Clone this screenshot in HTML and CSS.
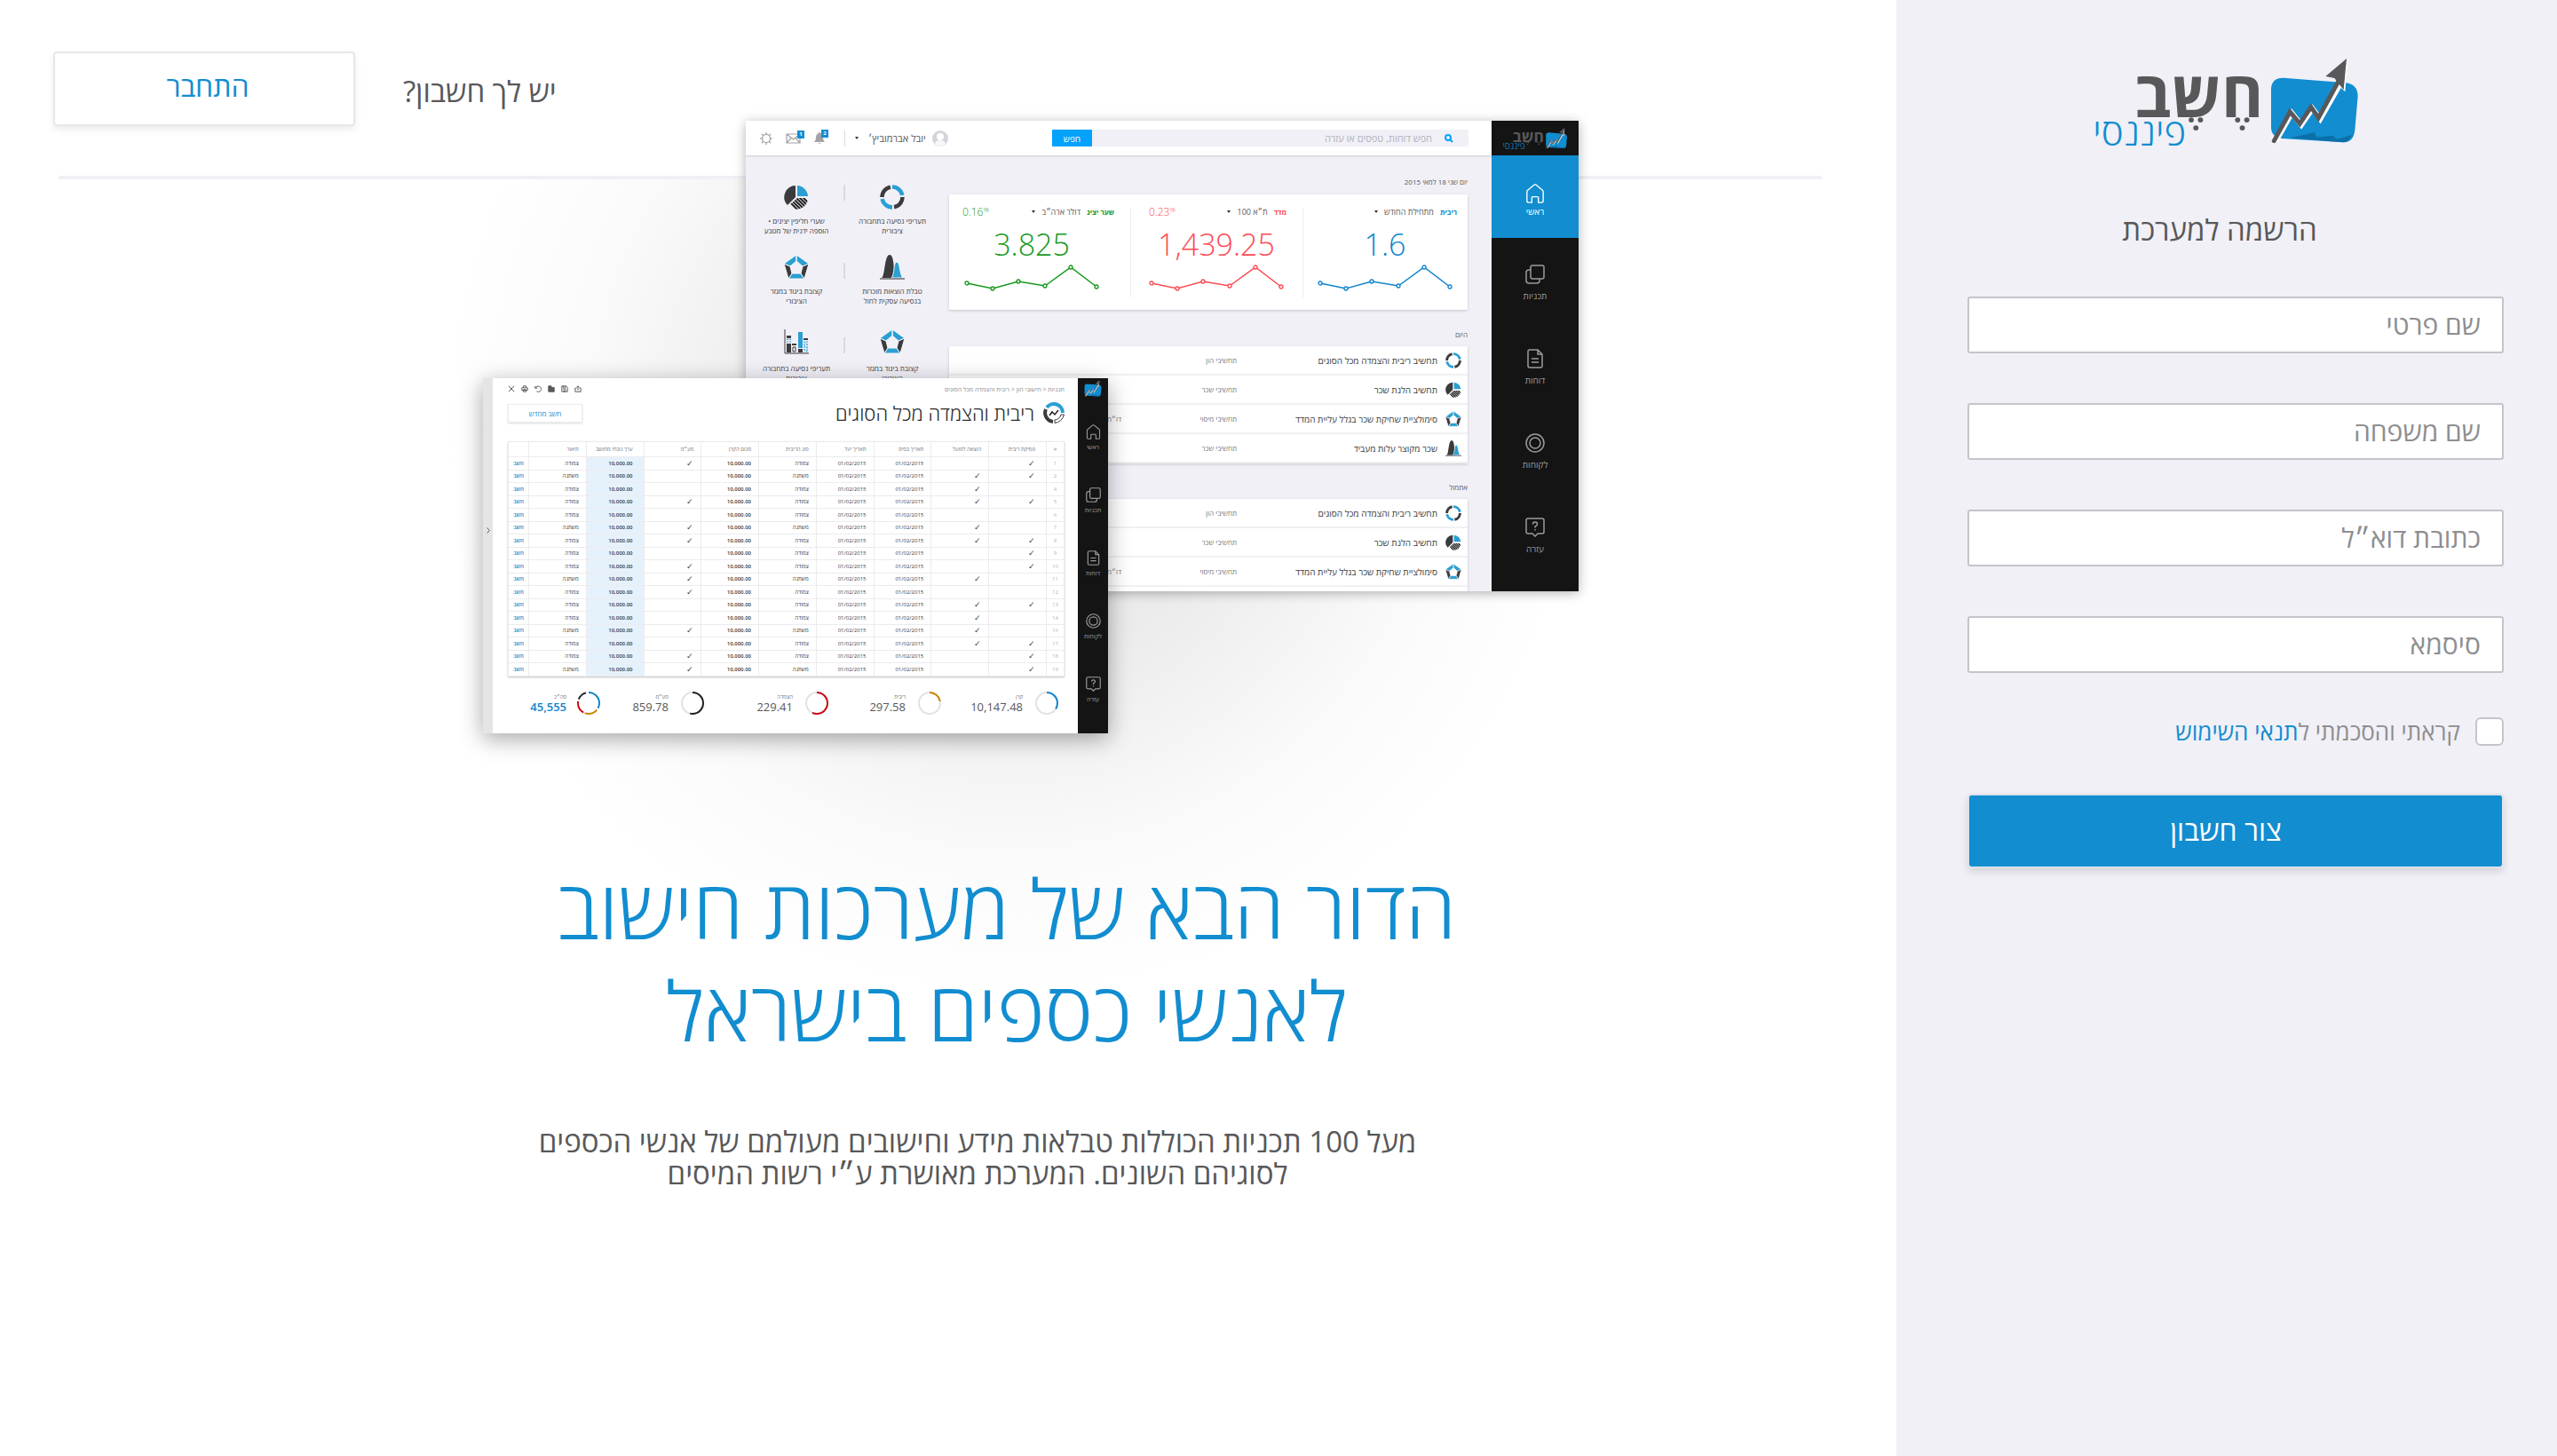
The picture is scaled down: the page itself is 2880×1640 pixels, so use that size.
FILE: index.html
```
<!DOCTYPE html>
<html lang="he" dir="rtl">
<head>
<meta charset="utf-8">
<meta name="viewport" content="width=device-width, initial-scale=1">
<title>חשב פיננסי - הרשמה למערכת</title>
<link rel="stylesheet" href="styles.css">
</head>
<body>

<svg class="defs" aria-hidden="true">
  <defs>
    <clipPath id="pie-clip"><path d="M15 15L27 15A13 13 0 0 1 5 24Z"/></clipPath>
    <symbol id="mark" viewBox="612 44 304 294">
      <path fill="#118dd0" d="M618 150Q620 112 660 113L870 130Q910 134 911 175L901 290Q896 332 860 331L655 318Q618 314 618 280Z"/>
      <path fill="#0b6fa8" d="M680 316L765 298L772 314L826 308L840 321L892 306Q880 330 860 331Z"/>
      <path fill="none" stroke="#fff" stroke-width="18" d="M634 327L688 232L720 272L758 217L784 252L858 122"/>
      <path fill="#fff" d="M878 52L868 160L846 140Z"/>
      <path fill="none" stroke="#58585a" stroke-width="15" stroke-linecap="round" d="M628 326L682 228L715 268L753 212L778 248L848 120"/>
      <path fill="#58585a" d="M873 48L802 108L832 114L863 154Z"/>
    </symbol>
    <symbol id="logo" viewBox="24 48 888 294">
      <use href="#mark" x="612" y="44" width="304" height="294"/>
      <text class="logo-name" x="374" y="247" text-anchor="middle">חֶשֶב</text>
      <text class="logo-sub" x="173" y="341" text-anchor="middle">פיננסי</text>
    </symbol>
    <symbol id="home" viewBox="0 0 22 24"><path d="M1 21V10Q1 8 3 7L9 2Q11 0 13 2L19 7Q21 8 21 10V21Q21 23 19 23H15V17Q15 16 14 16H8Q7 16 7 17V23H3Q1 23 1 21Z"/></symbol>
    <symbol id="copies" viewBox="0 0 22 22"><rect x="6" y="1" width="15" height="15" rx="2"/><path d="M6 6H4Q1 6 1 9V18Q1 21 4 21H13Q16 21 16 18V16"/></symbol>
    <symbol id="doc" viewBox="0 0 22 22"><path d="M3 3Q3 1 5 1H14L19 6V19Q19 21 17 21H5Q3 21 3 19ZM14 1V6H19M7 11H15M7 15H15"/></symbol>
    <symbol id="target" viewBox="0 0 22 22"><circle cx="11" cy="11" r="10"/><circle cx="11" cy="11" r="6"/></symbol>
    <symbol id="help" viewBox="0 0 22 22"><path d="M3 1H19Q21 1 21 3V16Q21 18 19 18H14L11 21L8 18H3Q1 18 1 16V3Q1 1 3 1Z"/><path d="M8.500 7.500Q8.500 5 11 5T13.500 7.500Q13.500 9 11 10V11.500M11 13V14.500"/></symbol>
    <symbol id="ring" viewBox="0 0 28 28"><g fill="none" stroke-width="4.500"><circle cx="14" cy="14" r="11.500" pathLength="100" stroke="#2a9fd3" stroke-dasharray="22 28" stroke-dashoffset="25"/><circle cx="14" cy="14" r="11.500" pathLength="100" stroke="#3b3b3d" stroke-dasharray="22 28"/></g></symbol>
    <symbol id="pie" viewBox="0 0 28 28"><path fill="#3b3b3d" d="M13 14V1A13 13 0 0 0 4 23Z"/><path fill="#2a9fd3" d="M15 13V1A13 13 0 0 1 27 13Z"/><path clip-path="url(#pie-clip)" stroke="#222" stroke-width="2" d="M4 13L20 29M8 13L24 29M12 13L28 29M16 13L32 29M0 13L16 29M20 13L32 25"/></symbol>
    <symbol id="penta" viewBox="0 0 28 28"><g stroke="#f7f7fb" stroke-width="1"><path fill="#2a9fd3" d="M14 0V7L7 13L0 10ZM14 0V7L21 13L28 10ZM5 27L9 21H19L23 27Z"/><path fill="#3b3b3d" d="M0 10L7 13L9 21L5 27ZM28 10L21 13L19 21L23 27Z"/></g></symbol>
    <symbol id="hills" viewBox="0 0 28 28"><path fill="#3b3b3d" d="M2 26C6 24 5 0 11 0C17 0 15 22 18 26Z"/><path fill="#2a9fd3" stroke="#f7f7fb" d="M13 26C17 22 15 8 19 8C23 8 22 22 26 26Z"/><path fill="#8d8d92" d="M0 26H28V28H0Z"/></symbol>
    <symbol id="bars" viewBox="0 0 28 28"><path fill="none" stroke="#3b3b3d" d="M1 0V27H28"/><path fill="#3b3b3d" d="M3 7H8V10H3ZM3 16H8V26H3ZM9 16H14V18H9ZM16 22H21V26H16ZM22 10H27V12H22Z"/><path fill="#2a9fd3" d="M16 3H21V21H16Z"/><path fill="none" stroke="#2a9fd3" stroke-dasharray="2 1" d="M3 11.500H8M3 14H8M23 14L27 18M23 18L27 22M23 22L27 26M26 13V26M23 13V26"/><path fill="none" stroke="#3b3b3d" d="M10 20H13V25H10Z"/></symbol>
    <symbol id="spark" viewBox="0 0 152 30"><path fill="none" stroke="currentColor" stroke-width="1.500" d="M3 21L32 27L61 19L91 24L120 3L149 25"/><g fill="#fff" stroke="currentColor" stroke-width="1.300"><circle cx="3" cy="21" r="2"/><circle cx="32" cy="27" r="2"/><circle cx="61" cy="19" r="2"/><circle cx="91" cy="24" r="2"/><circle cx="120" cy="3" r="2"/><circle cx="149" cy="25" r="2"/></g></symbol>
  </defs>
</svg>

<div class="page">
  <aside class="signup">
    <svg class="logo" role="img" aria-label="חשב פיננסי"><use href="#logo"/></svg>
    <h2 class="signup-title">הרשמה למערכת</h2>
    <form class="form">
      <input class="field" type="text" placeholder="שם פרטי" aria-label="שם פרטי">
      <input class="field" type="text" placeholder="שם משפחה" aria-label="שם משפחה">
      <input class="field" type="email" placeholder="כתובת דוא״ל" aria-label="כתובת דוא״ל">
      <input class="field" type="password" placeholder="סיסמא" aria-label="סיסמא">
      <div class="terms">
        <input class="check" type="checkbox" id="terms">
        <label for="terms">קראתי והסכמתי ל<a href="#terms">תנאי השימוש</a></label>
      </div>
      <button class="submit" type="submit">צור חשבון</button>
    </form>
  </aside>

  <main class="main">
    <header class="header">
      <span class="question">יש לך חשבון?</span>
      <button class="login" type="button">התחבר</button>
    </header>
    <hr class="rule">

    <section class="hero">
      <div class="stage">

        <div class="dash">
          <nav class="nav">
            <div class="nav-logo"><svg><use href="#logo"/></svg></div>
            <a class="nav-item active" href="#home"><svg><use href="#home"/></svg>ראשי</a>
            <a class="nav-item" href="#plans"><svg><use href="#copies"/></svg>תכניות</a>
            <a class="nav-item" href="#reports"><svg><use href="#doc"/></svg>דוחות</a>
            <a class="nav-item" href="#clients"><svg><use href="#target"/></svg>לקוחות</a>
            <a class="nav-item" href="#support"><svg><use href="#help"/></svg>עזרה</a>
          </nav>
          <div class="dash-main">
            <div class="topbar">
              <div class="search">
                <svg viewBox="0 0 10 10"><circle cx="4" cy="4" r="3"/><path d="M6 6L9 9"/></svg>
                <input type="search" placeholder="חפש דוחות, טפסים או עזרה" aria-label="חיפוש">
              </div>
              <button class="search-btn" type="button">חפש</button>
              <svg class="avatar" viewBox="0 0 18 18"><circle cx="9" cy="9" r="9" fill="#d4d4db"/><circle cx="9" cy="7" r="4" fill="#fff"/><path fill="#f7f7fb" d="M3 15Q4 11 9 11T15 15Q12 18 9 18T3 15Z"/></svg>
              <span class="user">יובל אברמוביץ׳</span>
              <span class="caret"></span>
              <span class="bar"></span>
              <span class="tool bell"><svg viewBox="0 0 12 13"><path fill="#a3a3a6" d="M6 0Q7 0 7 1Q10 2 10 6Q10 9 12 11H0Q2 9 2 6Q2 2 5 1Q5 0 6 0ZM4 12H8L6 13Z"/></svg><b class="badge">2</b></span>
              <span class="tool mail"><svg viewBox="0 0 17 12"><path fill="none" stroke="#a3a3a6" stroke-width="1.200" d="M1 1H16V11H1ZM1 1L8.500 7L16 1M1 11L6 5.500M16 11L11 5.500"/></svg><b class="badge">1</b></span>
              <svg class="gear" viewBox="0 0 14 14"><circle cx="7" cy="7" r="4.500"/><path d="M7 0V2M7 12V14M0 7H2M12 7H14M2 2L3.500 3.500M10.500 10.500L12 12M12 2L10.500 3.500M2 12L3.500 10.500"/></svg>
            </div>
            <div class="dash-body">
              <div class="cards">
                <p class="caption">יום שני 18 למאי 2015</p>
                <div class="stats">
                  <div class="stat blue"><div class="stat-head"><b>ריבית</b><span>מתחילת החודש</span><i class="caret"></i></div><div class="num">1.6</div><svg class="spark"><use href="#spark"/></svg></div>
                  <div class="stat red"><div class="stat-head"><b>מדד</b><span>ת״א 100</span><i class="caret"></i><em dir="ltr">0.23<sup>%</sup></em></div><div class="num">1,439.25</div><svg class="spark"><use href="#spark"/></svg></div>
                  <div class="stat green"><div class="stat-head"><b>שער יציג</b><span>דולר ארה״ב</span><i class="caret"></i><em dir="ltr">0.16<sup>%</sup></em></div><div class="num">3.825</div><svg class="spark"><use href="#spark"/></svg></div>
                </div>
                <p class="caption">היום</p>
                <ul class="list">
                  <li><svg><use href="#ring"/></svg><span class="name">תחשיב ריבית והצמדה מכל הסוגים</span><span class="kind">תחשיבי הון</span></li>
                  <li><svg><use href="#pie"/></svg><span class="name">תחשיב הלנת שכר</span><span class="kind">תחשיבי שכר</span></li>
                  <li><svg><use href="#penta"/></svg><span class="name">סימולציית שחיקת שכר בגלל עליית המדד</span><span class="kind">תחשיבי מיסוי</span><span>דו״ח</span></li>
                  <li><svg><use href="#hills"/></svg><span class="name">שכר מקוצר עלות מעביד</span><span class="kind">תחשיבי שכר</span></li>
                </ul>
                <p class="caption">אתמול</p>
                <ul class="list">
                  <li><svg><use href="#ring"/></svg><span class="name">תחשיב ריבית והצמדה מכל הסוגים</span><span class="kind">תחשיבי הון</span></li>
                  <li><svg><use href="#pie"/></svg><span class="name">תחשיב הלנת שכר</span><span class="kind">תחשיבי שכר</span></li>
                  <li><svg><use href="#penta"/></svg><span class="name">סימולציית שחיקת שכר בגלל עליית המדד</span><span class="kind">תחשיבי מיסוי</span><span>דו״ח</span></li>
                  <li></li>
                </ul>
              </div>
              <div class="shortcuts">
                <div class="shortcut"><svg><use href="#ring"/></svg>תעריפי נסיעה בתחבורה<br>ציבורית</div>
                <i class="sep"></i>
                <div class="shortcut"><svg><use href="#pie"/></svg>שערי חליפין יציגים •<br>הוספה ידנית של מטבע</div>
                <div class="shortcut"><svg><use href="#hills"/></svg>טבלת הוצאות מוכרות<br>בנסיעה עסקית לחול</div>
                <i class="sep low"></i>
                <div class="shortcut"><svg><use href="#penta"/></svg>קצובת ביגוד במגזר<br>הציבורי</div>
                <div class="shortcut last"><svg><use href="#penta"/></svg>קצובת ביגוד במגזר<br>הציבורי</div>
                <i class="sep low"></i>
                <div class="shortcut last"><svg><use href="#bars"/></svg>תעריפי נסיעה בתחבורה<br>ציבורים</div>
              </div>
            </div>
          </div>
        </div>

        <div class="calc">
          <nav class="nav small">
            <div class="nav-logo"><svg><use href="#mark"/></svg></div>
            <a class="nav-item" href="#home"><svg><use href="#home"/></svg>ראשי</a>
            <a class="nav-item" href="#plans"><svg><use href="#copies"/></svg>תכניות</a>
            <a class="nav-item" href="#reports"><svg><use href="#doc"/></svg>דוחות</a>
            <a class="nav-item" href="#clients"><svg><use href="#target"/></svg>לקוחות</a>
            <a class="nav-item" href="#support"><svg><use href="#help"/></svg>עזרה</a>
          </nav>
          <div class="calc-main">
            <div class="calc-top">
              <span class="crumbs">תכניות &lt; חישובי הון &lt; ריבית והצמדה מכל הסוגים</span>
              <div class="tools">
                <svg viewBox="0 0 10 10"><path d="M3 4H1V9H9V4H7M5 7V1M3 3L5 1L7 3"/></svg>
                <svg viewBox="0 0 10 10"><path d="M1 1H7L9 3V9H1ZM3 1V4H6V1M3 6H7M3 8H7"/></svg>
                <svg viewBox="0 0 10 10"><path fill="#58585a" d="M1 1H5V3H9V9H1Z"/></svg>
                <svg viewBox="0 0 10 10"><path d="M1 1V4H4M1.500 4A4 4 0 1 1 3 8.500"/></svg>
                <svg viewBox="0 0 10 10"><path d="M3 3V1H7V3M1 3.500H9V7H1ZM3 6H7V9H3Z"/></svg>
                <svg viewBox="0 0 10 10"><path d="M1 1L9 9M9 1L1 9"/></svg>
              </div>
            </div>
            <div class="calc-head">
              <svg viewBox="0 0 24 24"><path fill="none" stroke="#2a9fd3" stroke-width="4" d="M4 6A10 10 0 0 1 22 12"/><path fill="none" stroke="#3b3b3d" stroke-width="4" d="M3 8A10 10 0 0 0 11 22"/><path fill="none" stroke="#3b3b3d" d="M13 23.500A12 12 0 0 0 23.500 14H20A8 8 0 0 1 13 20Z"/><path fill="none" stroke="#222" stroke-width="1.500" d="M7 15L10 11L13 14L17 9"/></svg>
              <h3>ריבית והצמדה מכל הסוגים</h3>
              <button type="button">חשב מחדש</button>
            </div>
            <table class="grid">
              <colgroup><col class="c-no"><col class="c-int"><col><col><col><col><col><col><col><col><col class="c-act"></colgroup>
              <thead><tr><th>#</th><th>פסיקת ריבית</th><th>הוצאה לפועל</th><th>תאריך בסיס</th><th>תאריך יעד</th><th>סוג הריבית</th><th>סכום הקרן</th><th>מע״מ</th><th>ערך נוכחי מחושב</th><th>תיאור</th><th></th></tr></thead>
              <tbody>
                <tr><td>1</td><td>✓</td><td></td><td>01/02/2015</td><td>01/02/2015</td><td>צמודה</td><td>10,000.00</td><td>✓</td><td>10,000.00</td><td>צמודה</td><td><a href="#calc">חשב</a></td></tr>
                <tr><td>2</td><td>✓</td><td>✓</td><td>01/02/2015</td><td>01/02/2015</td><td>משתנה</td><td>10,000.00</td><td></td><td>10,000.00</td><td>משתנה</td><td><a href="#calc">חשב</a></td></tr>
                <tr><td>4</td><td></td><td>✓</td><td>01/02/2015</td><td>01/02/2015</td><td>צמודה</td><td>10,000.00</td><td></td><td>10,000.00</td><td>צמודה</td><td><a href="#calc">חשב</a></td></tr>
                <tr><td>5</td><td>✓</td><td>✓</td><td>01/02/2015</td><td>01/02/2015</td><td>צמודה</td><td>10,000.00</td><td>✓</td><td>10,000.00</td><td>צמודה</td><td><a href="#calc">חשב</a></td></tr>
                <tr><td>6</td><td></td><td></td><td>01/02/2015</td><td>01/02/2015</td><td>צמודה</td><td>10,000.00</td><td></td><td>10,000.00</td><td>צמודה</td><td><a href="#calc">חשב</a></td></tr>
                <tr><td>7</td><td></td><td>✓</td><td>01/02/2015</td><td>01/02/2015</td><td>משתנה</td><td>10,000.00</td><td>✓</td><td>10,000.00</td><td>משתנה</td><td><a href="#calc">חשב</a></td></tr>
                <tr><td>8</td><td>✓</td><td>✓</td><td>01/02/2015</td><td>01/02/2015</td><td>צמודה</td><td>10,000.00</td><td>✓</td><td>10,000.00</td><td>צמודה</td><td><a href="#calc">חשב</a></td></tr>
                <tr><td>9</td><td>✓</td><td></td><td>01/02/2015</td><td>01/02/2015</td><td>צמודה</td><td>10,000.00</td><td></td><td>10,000.00</td><td>צמודה</td><td><a href="#calc">חשב</a></td></tr>
                <tr><td>10</td><td>✓</td><td></td><td>01/02/2015</td><td>01/02/2015</td><td>צמודה</td><td>10,000.00</td><td>✓</td><td>10,000.00</td><td>צמודה</td><td><a href="#calc">חשב</a></td></tr>
                <tr><td>11</td><td></td><td>✓</td><td>01/02/2015</td><td>01/02/2015</td><td>משתנה</td><td>10,000.00</td><td>✓</td><td>10,000.00</td><td>משתנה</td><td><a href="#calc">חשב</a></td></tr>
                <tr><td>12</td><td></td><td></td><td>01/02/2015</td><td>01/02/2015</td><td>צמודה</td><td>10,000.00</td><td>✓</td><td>10,000.00</td><td>צמודה</td><td><a href="#calc">חשב</a></td></tr>
                <tr><td>13</td><td>✓</td><td>✓</td><td>01/02/2015</td><td>01/02/2015</td><td>צמודה</td><td>10,000.00</td><td></td><td>10,000.00</td><td>צמודה</td><td><a href="#calc">חשב</a></td></tr>
                <tr><td>14</td><td></td><td>✓</td><td>01/02/2015</td><td>01/02/2015</td><td>צמודה</td><td>10,000.00</td><td></td><td>10,000.00</td><td>צמודה</td><td><a href="#calc">חשב</a></td></tr>
                <tr><td>16</td><td></td><td>✓</td><td>01/02/2015</td><td>01/02/2015</td><td>משתנה</td><td>10,000.00</td><td>✓</td><td>10,000.00</td><td>משתנה</td><td><a href="#calc">חשב</a></td></tr>
                <tr><td>17</td><td>✓</td><td>✓</td><td>01/02/2015</td><td>01/02/2015</td><td>צמודה</td><td>10,000.00</td><td></td><td>10,000.00</td><td>צמודה</td><td><a href="#calc">חשב</a></td></tr>
                <tr><td>18</td><td>✓</td><td></td><td>01/02/2015</td><td>01/02/2015</td><td>צמודה</td><td>10,000.00</td><td>✓</td><td>10,000.00</td><td>צמודה</td><td><a href="#calc">חשב</a></td></tr>
                <tr><td>19</td><td>✓</td><td></td><td>01/02/2015</td><td>01/02/2015</td><td>משתנה</td><td>10,000.00</td><td>✓</td><td>10,000.00</td><td>משתנה</td><td><a href="#calc">חשב</a></td></tr>
              </tbody>
            </table>
            <div class="totals">
              <div class="total"><svg viewBox="0 0 26 26"><circle cx="13" cy="13" r="12"/><circle cx="13" cy="13" r="12" pathLength="100" stroke="#0f84cc" stroke-dasharray="34 66"/></svg><span><small>קרן</small>10,147.48</span></div>
              <div class="total"><svg viewBox="0 0 26 26"><circle cx="13" cy="13" r="12"/><circle cx="13" cy="13" r="12" pathLength="100" stroke="#cc8500" stroke-dasharray="22 78"/></svg><span><small>ריבית</small>297.58</span></div>
              <div class="total"><svg viewBox="0 0 26 26"><circle cx="13" cy="13" r="12"/><circle cx="13" cy="13" r="12" pathLength="100" stroke="#cc0a14" stroke-dasharray="57 43"/></svg><span><small>הצמדה</small>229.41</span></div>
              <div class="total"><svg viewBox="0 0 26 26"><circle cx="13" cy="13" r="12"/><circle cx="13" cy="13" r="12" pathLength="100" stroke="#222" stroke-dasharray="54 46"/></svg><span><small>מע״מ</small>859.78</span></div>
              <div class="total sum"><svg viewBox="0 0 26 26"><circle cx="13" cy="13" r="12" pathLength="100" stroke="#0f84cc" stroke-dasharray="33 67"/><circle cx="13" cy="13" r="12" pathLength="100" stroke="#cc8500" stroke-dasharray="20 80" stroke-dashoffset="-36"/><circle cx="13" cy="13" r="12" pathLength="100" stroke="#cc0a14" stroke-dasharray="20 80" stroke-dashoffset="-58"/><circle cx="13" cy="13" r="12" pathLength="100" stroke="#222" stroke-dasharray="15 85" stroke-dashoffset="-81"/></svg><span><small>סה״כ</small>45,555</span></div>
            </div>
          </div>
          <div class="strip"><svg viewBox="0 0 4 7"><path d="M0.500 0.500L3.500 3.500L0.500 6.500"/></svg></div>
        </div>
      </div>

      <h1 class="headline">הדור הבא של מערכות חישוב<br>לאנשי כספים בישראל</h1>
      <p class="lead">מעל 100 תכניות הכוללות טבלאות מידע וחישובים מעולמם של אנשי הכספים<br>לסוגיהם השונים. המערכת מאושרת ע״י רשות המיסים</p>
    </section>
  </main>
</div>
</body>
</html>
```
FILE: styles.css
```
* { box-sizing: border-box; }

body {
  margin: 0;
  font-family: "Open Sans", "Liberation Sans", sans-serif;
  color: #58585a;
  background: #fff;
}

h1, h2, h3, p, ul { margin: 0; padding: 0; font-weight: 400; }
a { color: inherit; text-decoration: none; }
button, input { font-family: inherit; }
button { cursor: pointer; padding: 0; }
.defs { position: absolute; width: 0; height: 0; }

.page { display: flex; min-height: 100vh; }

/* Sign-up panel */
.signup {
  flex: 0 0 744px;
  display: flex;
  flex-direction: column;
  align-items: center;
  padding-top: 66px;
  background: #f1f0f7;
}
.logo { width: 296px; height: 98px; }
.logo-name { font-size: 216px; font-weight: 700; fill: #58585a; }
.logo-sub { font-size: 126px; font-weight: 300; fill: #118dd0; }
.signup-title {
  margin: 75px 0 55px;
  padding-right: 16px;
  font-size: 33px;
  line-height: 40px;
}
.form {
  align-self: stretch;
  display: flex;
  flex-direction: column;
  gap: 56px;
  padding: 0 60px 0 80px;
}
.field {
  width: 100%;
  height: 64px;
  padding: 0 24px 2px;
  border: 2px solid #c4c4ca;
  border-radius: 3px;
  background: #fff;
  color: #58585a;
  font-size: 30px;
  outline: 0;
}
.field::placeholder { color: #8e8e90; opacity: 1; }
.terms {
  display: flex;
  align-items: center;
  gap: 17px;
  margin: -6px 0 -2px;
  font-size: 26px;
  line-height: 32px;
  color: #8e8e90;
}
.terms a { color: #118dd0; }
.check {
  appearance: none;
  width: 32px;
  height: 32px;
  margin: 0;
  border: 2px solid #c4c4ca;
  border-radius: 6px;
  background: #fff;
}
.submit {
  height: 84px;
  padding: 0 22px 4px 0;
  border: 2px solid #dfe3ea;
  border-radius: 4px;
  background: #118dd0;
  background-clip: padding-box;
  box-shadow: 0 4px 8px rgba(0, 0, 0, .12);
  color: #fff;
  font-size: 32px;
}

/* Page header */
.main { flex: 1; min-width: 0; }
.header {
  display: flex;
  justify-content: flex-end;
  align-items: center;
  gap: 54px;
  padding: 58px 84px 0 60px;
}
.question { padding-top: 4px; font-size: 33px; }
.login {
  width: 340px;
  height: 84px;
  padding: 0 0 8px 8px;
  border: 2px solid #e6e6ec;
  border-radius: 4px;
  background: #fff;
  box-shadow: 0 4px 8px rgba(0, 0, 0, .08);
  color: #118dd0;
  font-size: 32px;
}
.rule { height: 4px; margin: 56px 84px 0 66px; border: 0; background: #f0f0f7; }

/* Hero */
.hero {
  display: flex;
  flex-direction: column;
  align-items: center;
  background: radial-gradient(circle 640px at 1140px 278px, #dcdcdc 0, #ebebeb 40%, #fafafa 75%, #fff 100%);
}
.stage {
  display: grid;
  width: 1420px;
  margin-top: -66px;
  padding-left: 186px;
}
.headline {
  margin-top: 139px;
  padding-left: 132px;
  font-size: 92px;
  line-height: 115px;
  font-weight: 300;
  color: #118dd0;
  text-align: center;
}
.lead {
  margin-top: 73px;
  padding: 0 0 60px 66px;
  font-size: 33px;
  line-height: 36px;
  text-align: center;
}

/* Side navigation of both windows */
.nav { background: #141414; }
.nav-logo { display: flex; justify-content: center; align-items: center; height: 39px; }
.nav-logo svg { width: 72px; height: 24px; }
.nav-item {
  display: flex;
  flex-direction: column;
  align-items: center;
  gap: 6px;
  height: 95px;
  padding-top: 30px;
  color: #9b9b9d;
  font-size: 10px;
  line-height: 14px;
}
.nav-item svg { width: 22px; height: 22px; fill: none; stroke: currentColor; stroke-width: 1.5; }
.nav-item.active { gap: 2px; height: 93px; padding-top: 32px; background: #118dd0; color: #fff; }
.nav.small .nav-logo { height: 42px; padding-bottom: 20px; }
.nav.small .nav-logo svg { width: 20px; height: 19px; }
.nav.small .nav-item { gap: 4px; height: 71px; padding-top: 10px; font-size: 7px; line-height: 10px; }
.nav.small .nav-item svg { width: 17px; height: 17px; }

/* Dashboard window */
.dash {
  grid-area: 1 / 1;
  justify-self: start;
  align-self: start;
  display: grid;
  grid-template-columns: 98px 1fr;
  width: 938px;
  height: 530px;
  overflow: hidden;
  background: #f1f0f7;
  box-shadow: 0 2px 12px rgba(0, 0, 0, .3);
}
.topbar {
  display: flex;
  align-items: center;
  height: 39px;
  padding: 0 26px 0 16px;
  background: #fff;
  box-shadow: 0 1px 2px rgba(0, 0, 0, .15);
  font-size: 11px;
}
.search { display: flex; align-items: center; gap: 14px; flex: 0 0 424px; height: 19px; padding: 0 17px; background: #f1f0f7; }
.search svg { flex: none; width: 10px; height: 10px; fill: none; stroke: #03a2fb; stroke-width: 2; }
.search input { flex: 1; min-width: 0; padding: 0; border: 0; background: none; font-size: 11px; line-height: 18px; outline: 0; }
.search input::placeholder { color: #b0b0bb; opacity: 1; }
.search-btn { width: 45px; height: 19px; border: 0; background: #03a2fb; color: #fff; font-size: 10px; line-height: 16px; }
.avatar { width: 18px; height: 18px; margin: 0 auto 0 7px; }
.user { white-space: nowrap; }
.caret { width: 0; height: 0; border: 2px solid transparent; border-top: 3px solid #333; border-bottom: 0; }
.topbar .caret { margin: 0 11px; }
.bar { width: 1px; height: 18px; margin-left: 22px; background: #d9d9de; }
.tool { position: relative; display: block; margin-left: 15px; }
.tool svg { display: block; }
.bell svg { width: 12px; height: 13px; }
.mail svg { width: 17px; height: 12px; }
.badge {
  position: absolute;
  top: -3px;
  right: -4px;
  width: 8px;
  height: 9px;
  background: #118dd0;
  color: #fff;
  font-size: 6px;
  line-height: 9px;
  text-align: center;
}
.gear { width: 14px; height: 14px; fill: none; stroke: #98989b; stroke-width: 1.2; }

.dash-body { display: grid; grid-template-columns: 584px 1fr; padding-right: 27px; }
.cards { padding-top: 24px; }
.caption { font-size: 8px; line-height: 12px; margin-bottom: 7px; }
.caption:first-child { margin-bottom: 8px; }
.stats {
  display: grid;
  grid-template-columns: 186px 194px 204px;
  height: 130px;
  margin-bottom: 22px;
  background: #fff;
  box-shadow: 0 1px 3px rgba(0, 0, 0, .18);
}
.stat {
  display: flex;
  flex-direction: column;
  align-items: center;
  padding-top: 12px;
  background: linear-gradient(#ececf0, #ececf0) left 16px / 1px 100px no-repeat;
}
.stat.green { padding-right: 18px; background: none; }
.stat-head { display: flex; align-items: center; align-self: stretch; gap: 7px; height: 14px; padding: 0 12px; font-size: 9px; white-space: nowrap; }
.red .stat-head { padding: 0 18px 0 21px; }
.green .stat-head { padding: 0 0 0 15px; }
.stat-head b { font-size: 8px; }
.stat-head em { margin-right: auto; font-style: normal; font-size: 12px; font-weight: 300; }
.stat-head sup { font-size: 8px; line-height: 8px; vertical-align: 4px; }
.stat-head span { color: #58585a; }
.blue { color: #0f84cc; }
.red { color: #fb4b52; }
.green { color: #16991d; }
.num { margin-top: 12px; font-size: 34px; line-height: 36px; font-weight: 300; }
.spark { width: 152px; height: 30px; margin-top: 5px; }

.list { list-style: none; margin-bottom: 21px; background: #fff; box-shadow: 0 1px 3px rgba(0, 0, 0, .18); }
.list li { display: flex; align-items: center; height: 33px; padding-right: 7px; border-bottom: 2px solid #f1f1f3; font-size: 8px; color: #77777a; }
.list svg { width: 18px; height: 18px; margin-left: 9px; }
.list .name { width: 226px; font-size: 10px; color: #3b3b3d; }
.list .kind { width: 130px; }

.shortcuts {
  display: grid;
  grid-template-columns: 1fr 2px 1fr;
  grid-template-rows: 79px 84px auto;
  align-content: start;
  padding: 33px 11px 0 4px;
}
.shortcut { font-size: 8px; line-height: 11px; color: #3b3b3d; text-align: center; }
.shortcut svg { display: block; width: 28px; height: 28px; margin: 0 auto 7px; }
.shortcut.last svg { margin-bottom: 10px; }
.sep { height: 18px; background: #d9d9de; }
.sep.low { margin-top: 9px; }

/* Calculation window */
.calc {
  grid-area: 1 / 1;
  justify-self: end;
  display: grid;
  grid-template-columns: 34px 1fr 11px;
  width: 704px;
  height: 400px;
  margin-top: 290px;
  background: #fff;
  box-shadow: 0 6px 24px rgba(0, 0, 0, .35);
}
.calc-main { padding: 6px 15px 0 17px; }
.calc-top { display: flex; justify-content: space-between; align-items: center; height: 12px; }
.crumbs { font-size: 7px; color: #8e8e90; }
.tools { display: flex; gap: 7px; }
.tools svg { width: 8px; height: 8px; fill: none; stroke: #58585a; stroke-width: 1.2; }
.calc-head { display: flex; align-items: center; height: 24px; margin: 9px 0 20px; }
.calc-head svg { width: 24px; height: 24px; margin-left: 10px; }
.calc-head h3 { font-size: 22px; line-height: 24px; font-weight: 300; color: #2b2b2d; }
.calc-head button {
  width: 84px;
  height: 21px;
  margin-right: auto;
  border: 1px solid #ececf0;
  background: #fff;
  box-shadow: 0 1px 2px rgba(0, 0, 0, .15);
  color: #118dd0;
  font-size: 8px;
}
.grid {
  width: 100%;
  height: 265px;
  table-layout: fixed;
  border-collapse: collapse;
  box-shadow: 0 1px 2px rgba(0, 0, 0, .25);
  font-size: 6px;
  line-height: 8px;
}
.grid th, .grid td { padding: 0 8px 0 0; border: 1px solid #ececef; text-align: right; font-weight: 400; white-space: nowrap; }
.grid thead tr { height: 17px; }
.grid th { color: #77777a; }
.grid td { color: #3b3b3d; }
.c-no { width: 20px; }
.c-int { width: 65px; }
.c-act { width: 23px; }
.grid td:first-child, .grid th:first-child, .grid td:last-child { padding: 0; text-align: center; color: #b5b5b8; }
.grid td:nth-child(2), .grid th:nth-child(2) { padding-right: 12px; }
.grid td:nth-child(2), .grid td:nth-child(3), .grid td:nth-child(8) { font-size: 9px; }
.grid td:nth-child(7), .grid td:nth-child(9) { font-weight: 600; }
.grid th:nth-child(9), .grid td:nth-child(9) { padding-right: 12px; }
.grid td:nth-child(9) { background: #e5f2fb; }
.grid td a { color: #118dd0; font-weight: 600; }

.totals { display: grid; grid-template-columns: 132px 127px 140px 117px auto; margin-top: 17px; padding-right: 7px; }
.total { display: flex; align-items: center; gap: 14px; font-size: 13px; line-height: 15px; color: #58585a; }
.total svg { width: 26px; height: 26px; fill: none; stroke: #e1e1e8; stroke-width: 2; transform: rotate(-90deg); }
.total small { display: block; font-size: 6px; line-height: 8px; font-weight: 400; color: #77777a; }
.total.sum { gap: 12px; font-weight: 600; color: #0f84cc; }
.strip { display: flex; align-items: center; justify-content: center; padding-bottom: 58px; background: #e5e5e8; }
.strip svg { width: 4px; height: 7px; fill: none; stroke: #58585a; }
```
